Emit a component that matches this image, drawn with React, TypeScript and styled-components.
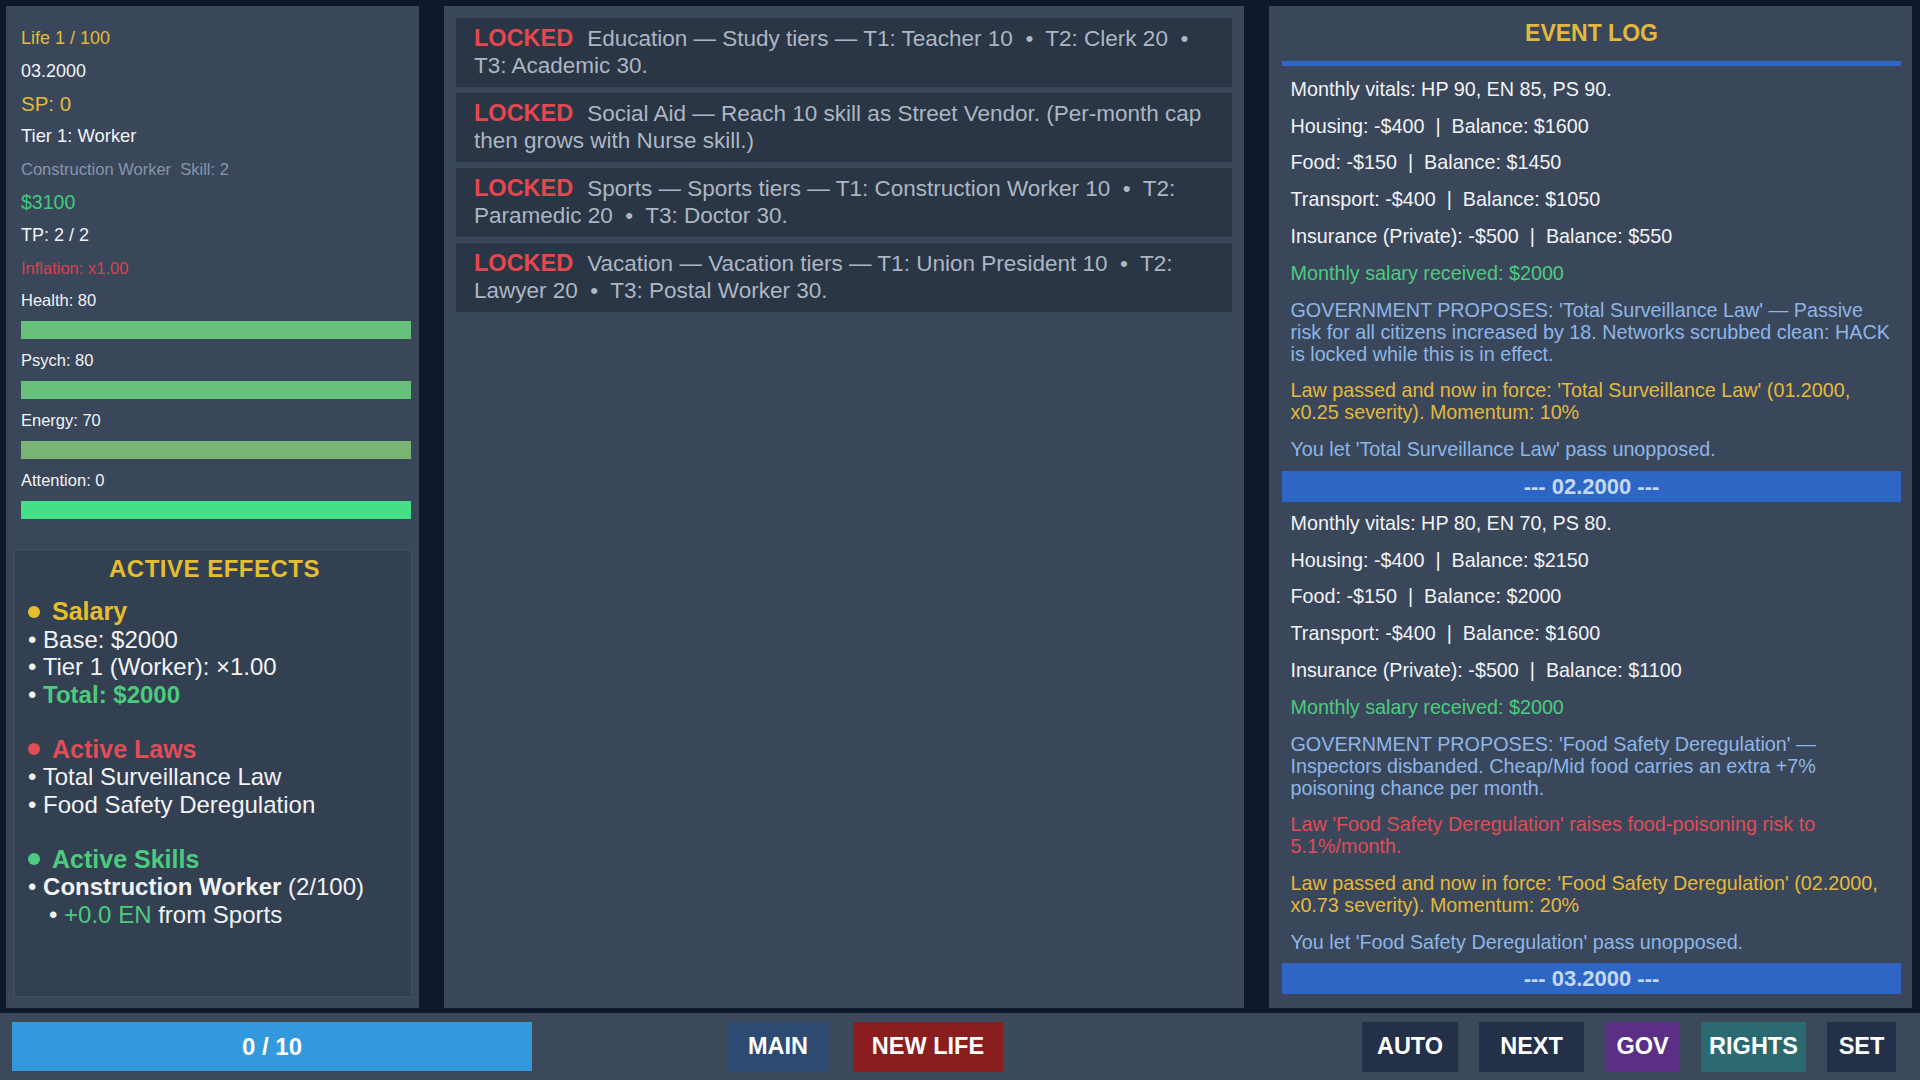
import styled, { createGlobalStyle } from 'styled-components';

const GlobalStyle = createGlobalStyle`
  html, body {
    margin: 0;
    padding: 0;
    background: #0e1a2c;
  }
  body {
    font-family: "Liberation Sans", Arial, sans-serif;
  }
`;

const YELLOW = '#e3b93d';
const GREEN = '#4ccb7e';
const RED = '#df4d56';
const WHITE = '#f1f3f6';
const LIGHT_BLUE = '#8db6e7';

type LogKind = 'plain' | 'good' | 'info' | 'warn' | 'bad';

const logColors: Record<LogKind, string> = {
  plain: WHITE,
  good: GREEN,
  info: LIGHT_BLUE,
  warn: YELLOW,
  bad: RED,
};

const stats = [
  { text: 'Life 1 / 100', size: 18, color: YELLOW },
  { text: '03.2000', size: 18, color: WHITE },
  { text: 'SP: 0', size: 20.5, color: YELLOW },
  { text: 'Tier 1: Worker', size: 18.4, color: WHITE },
  { text: 'Construction Worker\u00a0\u00a0Skill: 2', size: 16.5, color: '#8795ab' },
  { text: '$3100', size: 19.5, color: '#3fcb7c' },
  { text: 'TP: 2 / 2', size: 18, color: WHITE },
  { text: 'Inflation: x1.00', size: 16.5, color: '#d6434e' },
];

const vitals = [
  { label: 'Health: 80', value: 100, color: '#67c17b' },
  { label: 'Psych: 80', value: 100, color: '#67c17b' },
  { label: 'Energy: 70', value: 100, color: '#79b473' },
  { label: 'Attention: 0', value: 100, color: '#45df88' },
];

const careers = [
  { name: 'Education', text: 'Education \u2014 Study tiers \u2014 T1: Teacher 10 \u00a0\u2022\u00a0 T2: Clerk 20 \u00a0\u2022\u00a0 T3: Academic 30.' },
  { name: 'Social Aid', text: 'Social Aid \u2014 Reach 10 skill as Street Vendor. (Per-month cap then grows with Nurse skill.)' },
  { name: 'Sports', text: 'Sports \u2014 Sports tiers \u2014 T1: Construction Worker 10 \u00a0\u2022\u00a0 T2: Paramedic 20 \u00a0\u2022\u00a0 T3: Doctor 30.' },
  { name: 'Vacation', text: 'Vacation \u2014 Vacation tiers \u2014 T1: Union President 10 \u00a0\u2022\u00a0 T2: Lawyer 20 \u00a0\u2022\u00a0 T3: Postal Worker 30.' },
];

type LogItem = { kind: LogKind; text: string } | { date: string };

const log: LogItem[] = [
  { kind: 'plain', text: 'Monthly vitals: HP 90, EN 85, PS 90.' },
  { kind: 'plain', text: 'Housing: -$400  |  Balance: $1600' },
  { kind: 'plain', text: 'Food: -$150  |  Balance: $1450' },
  { kind: 'plain', text: 'Transport: -$400  |  Balance: $1050' },
  { kind: 'plain', text: 'Insurance (Private): -$500  |  Balance: $550' },
  { kind: 'good', text: 'Monthly salary received: $2000' },
  {
    kind: 'info',
    text: "GOVERNMENT PROPOSES: 'Total Surveillance Law' \u2014 Passive risk for all citizens increased by 18. Networks scrubbed clean: HACK is locked while this is in effect.",
  },
  {
    kind: 'warn',
    text: "Law passed and now in force: 'Total Surveillance Law' (01.2000, x0.25 severity). Momentum: 10%",
  },
  { kind: 'info', text: "You let 'Total Surveillance Law' pass unopposed." },
  { date: '--- 02.2000 ---' },
  { kind: 'plain', text: 'Monthly vitals: HP 80, EN 70, PS 80.' },
  { kind: 'plain', text: 'Housing: -$400  |  Balance: $2150' },
  { kind: 'plain', text: 'Food: -$150  |  Balance: $2000' },
  { kind: 'plain', text: 'Transport: -$400  |  Balance: $1600' },
  { kind: 'plain', text: 'Insurance (Private): -$500  |  Balance: $1100' },
  { kind: 'good', text: 'Monthly salary received: $2000' },
  {
    kind: 'info',
    text: "GOVERNMENT PROPOSES: 'Food Safety Deregulation' \u2014 Inspectors disbanded. Cheap/Mid food carries an extra +7% poisoning chance per month.",
  },
  {
    kind: 'bad',
    text: "Law 'Food Safety Deregulation' raises food-poisoning risk to 5.1%/month.",
  },
  {
    kind: 'warn',
    text: "Law passed and now in force: 'Food Safety Deregulation' (02.2000, x0.73 severity). Momentum: 20%",
  },
  { kind: 'info', text: "You let 'Food Safety Deregulation' pass unopposed." },
  { date: '--- 03.2000 ---' },
];

const rightButtons = [
  { label: 'AUTO', width: 96, bg: '#233048' },
  { label: 'NEXT', width: 105, bg: '#233048' },
  { label: 'GOV', width: 75, bg: '#5c2f87' },
  { label: 'RIGHTS', width: 105, bg: '#2a6a70' },
  { label: 'SET', width: 69, bg: '#233048' },
];

function App() {
  return (
    <>
      <GlobalStyle />
      <Screen>
        <Main>
          <StatusPanel>
            <Stats>
              {stats.map((s) => (
                <StatLine key={s.text} $size={s.size} $color={s.color}>
                  {s.text}
                </StatLine>
              ))}
              {vitals.map((v) => (
                <div key={v.label}>
                  <StatLine $size={16.5} $color={WHITE}>
                    {v.label}
                  </StatLine>
                  <BarTrack>
                    <BarFill $color={v.color} style={{ width: `${v.value}%` }} />
                  </BarTrack>
                </div>
              ))}
            </Stats>
            <EffectsBox>
              <EffectsTitle>ACTIVE EFFECTS</EffectsTitle>
              <EffectGroup>
                <EffectHeading $color="#e6bd2f">
                  <Dot $color="#e6bd2f" />
                  Salary
                </EffectHeading>
                <EffectItem>• Base: $2000</EffectItem>
                <EffectItem>• Tier 1 (Worker): ×1.00</EffectItem>
                <EffectItem>
                  • <Strong $color={GREEN}>Total: $2000</Strong>
                </EffectItem>
              </EffectGroup>
              <EffectGroup>
                <EffectHeading $color={RED}>
                  <Dot $color={RED} />
                  Active Laws
                </EffectHeading>
                <EffectItem>• Total Surveillance Law</EffectItem>
                <EffectItem>• Food Safety Deregulation</EffectItem>
              </EffectGroup>
              <EffectGroup>
                <EffectHeading $color={GREEN}>
                  <Dot $color={GREEN} />
                  Active Skills
                </EffectHeading>
                <EffectItem>
                  • <Strong $color={WHITE}>Construction Worker</Strong> (2/100)
                </EffectItem>
                <EffectItem $sub>
                  • <Tint $color={GREEN}>+0.0 EN</Tint> from Sports
                </EffectItem>
              </EffectGroup>
            </EffectsBox>
          </StatusPanel>

          <CareerPanel>
            {careers.map((c) => (
              <CareerCard key={c.name}>
                <Locked>LOCKED</Locked>
                {c.text}
              </CareerCard>
            ))}
          </CareerPanel>

          <LogPanel>
            <LogTitle>EVENT LOG</LogTitle>
            <LogRule />
            <LogList>
              {log.map((item, i) =>
                'date' in item ? (
                  <DateBand key={i}>{item.date}</DateBand>
                ) : (
                  <LogEntry key={i} $color={logColors[item.kind]}>
                    {item.text}
                  </LogEntry>
                ),
              )}
            </LogList>
          </LogPanel>
        </Main>

        <BottomBar>
          <Progress>0 / 10</Progress>
          <CenterGroup>
            <ActionButton $width={102} $bg="#2d4a72">
              MAIN
            </ActionButton>
            <ActionButton $width={150} $bg="#8a1e1f">
              NEW LIFE
            </ActionButton>
          </CenterGroup>
          <RightGroup>
            {rightButtons.map((b) => (
              <ActionButton key={b.label} $width={b.width} $bg={b.bg}>
                {b.label}
              </ActionButton>
            ))}
          </RightGroup>
        </BottomBar>
      </Screen>
    </>
  );
}

export default App;

const Screen = styled.div`
  width: 1920px;
  height: 1080px;
  display: flex;
  flex-direction: column;
  background: #0e1a2c;
  overflow: hidden;
`;

const Main = styled.div`
  height: 1013px;
  box-sizing: border-box;
  padding: 6px 7px 5px 6px;
  display: grid;
  grid-template-columns: 413px 800px 643px;
  column-gap: 25px;
`;

const Panel = styled.section`
  background: #3a475a;
  overflow: hidden;
  box-sizing: border-box;
`;

const StatusPanel = styled(Panel)`
  display: flex;
  flex-direction: column;
`;

const Stats = styled.div`
  padding: 16px 8px 0 15px;
`;

const StatLine = styled.div<{ $size: number; $color: string }>`
  height: 32.8px;
  line-height: 32.8px;
  font-size: ${(p) => p.$size}px;
  color: ${(p) => p.$color};
  white-space: nowrap;
`;

const BarTrack = styled.div`
  height: 18px;
  margin: 4px 0 5px;
  background: #2c3747;
`;

const BarFill = styled.div<{ $color: string }>`
  height: 100%;
  background: ${(p) => p.$color};
`;

const EffectsBox = styled.div`
  flex: 1;
  margin: 25px 6px 10px 7px;
  padding: 4px 10px 0 13px;
  background: #334052;
  border: 2px solid #3f4c60;
`;

const EffectsTitle = styled.div`
  text-align: center;
  font-size: 24px;
  letter-spacing: 0.5px;
  font-weight: 700;
  line-height: 28px;
  color: #e6bd2f;
  margin-bottom: 15.5px;
`;

const EffectGroup = styled.div`
  & + & {
    margin-top: 27.5px;
  }
`;

const EffectHeading = styled.div<{ $color: string }>`
  display: flex;
  align-items: center;
  height: 27.5px;
  font-size: 25px;
  font-weight: 700;
  color: ${(p) => p.$color};
`;

const Dot = styled.span<{ $color: string }>`
  width: 12px;
  height: 12px;
  border-radius: 50%;
  margin-right: 12px;
  background: ${(p) => p.$color};
`;

const EffectItem = styled.div<{ $sub?: boolean }>`
  line-height: 27.5px;
  font-size: 24px;
  color: ${WHITE};
  padding-left: ${(p) => (p.$sub ? '21px' : '0')};
  white-space: nowrap;
`;

const Strong = styled.b<{ $color: string }>`
  color: ${(p) => p.$color};
`;

const Tint = styled.span<{ $color: string }>`
  color: ${(p) => p.$color};
`;

const CareerPanel = styled(Panel)`
  padding: 12px;
  display: flex;
  flex-direction: column;
  gap: 6px;
`;

const CareerCard = styled.div`
  background: #2a3545;
  padding: 8px 18px;
  font-size: 22.5px;
  line-height: 26.5px;
  color: #adb6c3;
`;

const Locked = styled.span`
  font-size: 23.5px;
  line-height: 1;
  font-weight: 700;
  color: #e4484e;
  margin-right: 14px;
`;

const LogPanel = styled(Panel)`
  padding: 13px 11px 0 13px;
`;

const LogTitle = styled.div`
  text-align: center;
  font-size: 23px;
  font-weight: 700;
  line-height: 28px;
  color: ${YELLOW};
`;

const LogRule = styled.div`
  height: 5px;
  margin-top: 14px;
  background: #2f67c8;
`;

const LogList = styled.div`
  margin-top: 4.5px;
`;

const LogEntry = styled.div<{ $color: string }>`
  padding: 7.4px 11px 7.4px 8.5px;
  font-size: 19.75px;
  line-height: 22px;
  color: ${(p) => p.$color};
  white-space: pre-wrap;
`;

const DateBand = styled.div`
  margin: 3px 0;
  height: 31px;
  line-height: 31px;
  text-align: center;
  font-size: 22px;
  font-weight: 700;
  color: #c3d9f6;
  background: #2e66c6;
`;

const BottomBar = styled.footer`
  height: 67px;
  box-sizing: border-box;
  padding: 0 24px 0 12px;
  display: flex;
  align-items: center;
  background: #3c495b;
`;

const Progress = styled.div`
  width: 520px;
  height: 49px;
  display: flex;
  align-items: center;
  justify-content: center;
  background: #3498dc;
  color: #ffffff;
  font-size: 24px;
  font-weight: 700;
`;

const CenterGroup = styled.div`
  display: flex;
  gap: 24px;
  margin-left: 195px;
`;

const RightGroup = styled.div`
  display: flex;
  gap: 21px;
  margin-left: auto;
`;

const ActionButton = styled.button<{ $width: number; $bg: string }>`
  width: ${(p) => p.$width}px;
  height: 50px;
  padding: 0;
  border: none;
  background: ${(p) => p.$bg};
  color: #ffffff;
  font-family: "Liberation Sans", Arial, sans-serif;
  font-size: 23.5px;
  font-weight: 700;
  cursor: pointer;
`;
